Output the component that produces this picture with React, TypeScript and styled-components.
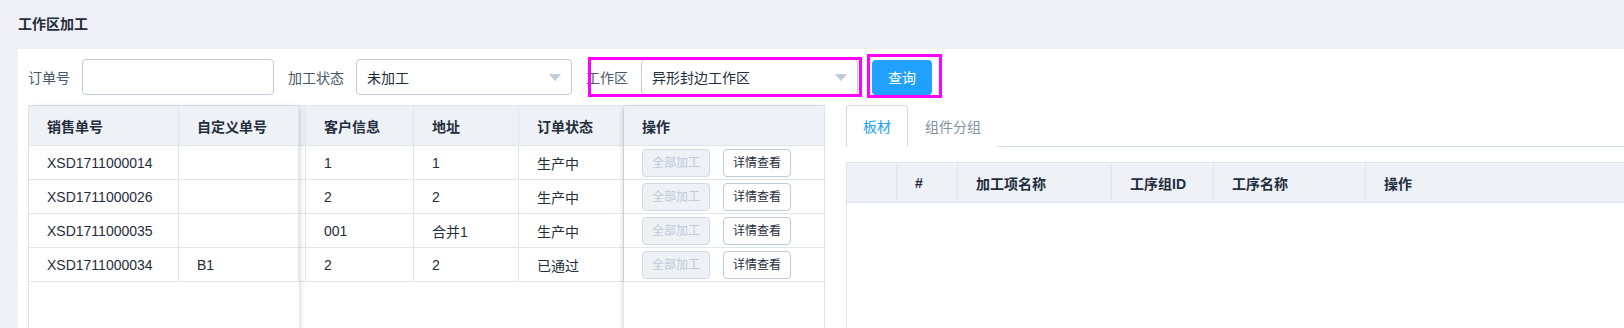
import React from 'react';
import styled, { createGlobalStyle } from 'styled-components';

const GlobalStyle = createGlobalStyle`
  html, body { margin: 0; padding: 0; overflow: hidden; background: #eff1f6; }
  body {
    font-family: "Liberation Sans", "Noto Sans CJK SC", sans-serif;
    font-size: 14px;
    color: #1f2d3d;
  }
  * { box-sizing: border-box; }
`;

const Page = styled.div`
  width: 1624px;
  height: 328px;
  overflow: hidden;
`;

const PageTitle = styled.div`
  height: 49px;
  line-height: 49px;
  padding-left: 18px;
  font-size: 14px;
  font-weight: bold;
  color: #1f2d3d;
`;

const Panel = styled.div`
  margin-left: 18px;
  width: 1640px;
  height: 300px;
  padding: 10px;
  background: #fff;
`;

const FormRow = styled.div`
  display: flex;
  align-items: center;
  height: 36px;
  margin-bottom: 10px;
`;

const FormItem = styled.div`
  position: relative;
  display: flex;
  align-items: center;
  margin-right: 14px;
`;

const Label = styled.span`
  margin-right: ${(p: { $gap?: number }) => p.$gap ?? 12}px;
  font-size: 14px;
  color: #48576a;
  white-space: nowrap;
`;

const TextInput = styled.input`
  width: 192px;
  height: 36px;
  padding: 0 10px;
  border: 1px solid #bfcbd9;
  border-radius: 4px;
  font: inherit;
  outline: none;
`;

const SelectBox = styled.div<{ $width: number }>`
  display: flex;
  align-items: center;
  justify-content: space-between;
  width: ${(p) => p.$width}px;
  height: 36px;
  padding: 0 10px;
  border: 1px solid #bfcbd9;
  border-radius: 4px;
  font-size: 14px;
  color: #1f2d3d;
`;

const PrimaryButton = styled.button`
  width: 60px;
  height: 35px;
  border: none;
  border-radius: 4px;
  background: #20a0ff;
  color: #fff;
  font: inherit;
  font-size: 14px;
`;

const Highlight = styled.div<{ $t: number; $r: number; $b: number; $l: number }>`
  position: absolute;
  top: ${(p) => p.$t}px;
  right: ${(p) => p.$r}px;
  bottom: ${(p) => p.$b}px;
  left: ${(p) => p.$l}px;
  border: 3px solid #f0f;
  pointer-events: none;
`;

const Content = styled.div`
  display: grid;
  grid-template-columns: 797px 797px;
  column-gap: 21px;
`;

const TableFrame = styled.div<{ $height: number }>`
  display: flex;
  height: ${(p) => p.$height}px;
  border: 1px solid #dfe6ec;
  border-bottom: none;
`;

const ColumnGroup = styled.div<{ $fixed?: 'left' | 'right'; $grow?: boolean }>`
  position: relative;
  z-index: ${(p) => (p.$fixed ? 2 : 1)};
  display: flex;
  flex-direction: column;
  flex: ${(p) => (p.$grow ? '1 1 auto' : 'none')};
  background: #fff;
  box-shadow: ${(p) =>
    p.$fixed === 'left'
      ? '2px 0 6px -2px rgba(0,0,0,0.22)'
      : p.$fixed === 'right'
      ? '-2px 0 6px -2px rgba(0,0,0,0.22)'
      : 'none'};
`;

const HeadRow = styled.div`
  display: flex;
  height: 40px;
  background: #eef1f6;
  border-bottom: 1px solid #dfe6ec;
`;

const BodyRow = styled.div`
  display: flex;
  height: 34px;
  border-bottom: 1px solid #dfe6ec;
`;

const Cell = styled.div<{ $w?: number; $head?: boolean; $noBorder?: boolean; $pad?: number }>`
  display: flex;
  align-items: center;
  flex: ${(p) => (p.$w ? `0 0 ${p.$w}px` : '1 1 auto')};
  padding: 0 ${(p) => p.$pad ?? 18}px;
  border-right: ${(p) => (p.$noBorder ? 'none' : '1px solid #dfe6ec')};
  font-size: 14px;
  font-weight: ${(p) => (p.$head ? 'bold' : 'normal')};
  color: #1f2d3d;
  white-space: nowrap;
  overflow: hidden;
`;

const SmallButton = styled.button<{ $disabled?: boolean }>`
  height: 28px;
  padding: 0 9px;
  margin-right: 13px;
  border: 1px solid ${(p) => (p.$disabled ? '#d1dbe5' : '#bfcbd9')};
  border-radius: 4px;
  background: ${(p) => (p.$disabled ? '#eef1f6' : '#fff')};
  color: ${(p) => (p.$disabled ? '#bfcbd9' : '#1f2d3d')};
  font-family: inherit;
  font-size: 12px;
  line-height: 1;
`;

const TabBar = styled.div`
  display: flex;
  height: 42px;
  border-bottom: 1px solid #d1dbe5;
  margin-bottom: 15px;
`;

const Tab = styled.div<{ $active?: boolean }>`
  height: 42px;
  line-height: 42px;
  padding: 0 16px;
  font-size: 14px;
  color: ${(p) => (p.$active ? '#20a0ff' : '#8391a5')};
  border: 1px solid ${(p) => (p.$active ? '#d1dbe5' : 'transparent')};
  border-bottom-color: ${(p) => (p.$active ? '#fff' : 'transparent')};
  border-radius: 4px 4px 0 0;
  background: #fff;
`;

const Caret = () => (
  <svg width="12" height="7" viewBox="0 0 12 7">
    <path d="M0.6 0.6 H11.4 L6 6.6 Z" fill="#bfcbd9" stroke="#bfcbd9" strokeWidth="0.8" strokeLinejoin="round" />
  </svg>
);

const orders = [
  { no: 'XSD1711000014', custom: '', customer: '1', addr: '1', status: '生产中' },
  { no: 'XSD1711000026', custom: '', customer: '2', addr: '2', status: '生产中' },
  { no: 'XSD1711000035', custom: '', customer: '001', addr: '合并1', status: '生产中' },
  { no: 'XSD1711000034', custom: 'B1', customer: '2', addr: '2', status: '已通过' },
];

const rightCols = [
  { w: 50, label: '' },
  { w: 61, label: '#' },
  { w: 154, label: '加工项名称' },
  { w: 102, label: '工序组ID' },
  { w: 152, label: '工序名称' },
];

export default function App() {
  return (
    <Page>
      <GlobalStyle />
      <PageTitle>工作区加工</PageTitle>
      <Panel>
        <FormRow>
          <FormItem>
            <Label>订单号</Label>
            <TextInput />
          </FormItem>
          <FormItem>
            <Label>加工状态</Label>
            <SelectBox $width={216}>
              <span>未加工</span>
              <Caret />
            </SelectBox>
          </FormItem>
          <FormItem>
            <Label $gap={13}>工作区</Label>
            <SelectBox $width={217}>
              <span>异形封边工作区</span>
              <Caret />
            </SelectBox>
            <Highlight $t={-2} $r={-4} $b={-2} $l={2} />
          </FormItem>
          <FormItem>
            <PrimaryButton>查询</PrimaryButton>
            <Highlight $t={-6} $r={-10} $b={-3} $l={-5} />
          </FormItem>
        </FormRow>

        <Content>
          <TableFrame $height={240}>
            <ColumnGroup $fixed="left">
              <HeadRow>
                <Cell $w={150} $head>销售单号</Cell>
                <Cell $w={120} $head>自定义单号</Cell>
              </HeadRow>
              {orders.map((o) => (
                <BodyRow key={o.no}>
                  <Cell $w={150}>{o.no}</Cell>
                  <Cell $w={120}>{o.custom}</Cell>
                </BodyRow>
              ))}
            </ColumnGroup>
            <ColumnGroup $grow>
              <HeadRow>
                <Cell $w={7} $pad={0} />
                <Cell $w={108} $head>客户信息</Cell>
                <Cell $w={105} $head>地址</Cell>
                <Cell $head>订单状态</Cell>
              </HeadRow>
              {orders.map((o) => (
                <BodyRow key={o.no}>
                  <Cell $w={7} $pad={0} />
                  <Cell $w={108}>{o.customer}</Cell>
                  <Cell $w={105}>{o.addr}</Cell>
                  <Cell>{o.status}</Cell>
                </BodyRow>
              ))}
            </ColumnGroup>
            <ColumnGroup $fixed="right">
              <HeadRow>
                <Cell $w={200} $head $noBorder>操作</Cell>
              </HeadRow>
              {orders.map((o) => (
                <BodyRow key={o.no}>
                  <Cell $w={200} $noBorder>
                    <SmallButton $disabled>全部加工</SmallButton>
                    <SmallButton>详情查看</SmallButton>
                  </Cell>
                </BodyRow>
              ))}
            </ColumnGroup>
          </TableFrame>

          <div>
            <TabBar>
              <Tab $active>板材</Tab>
              <Tab>组件分组</Tab>
            </TabBar>
            <TableFrame $height={200}>
              <ColumnGroup $grow>
                <HeadRow>
                  {rightCols.map((c, i) => (
                    <Cell key={i} $w={c.w} $head>{c.label}</Cell>
                  ))}
                  <Cell $head $noBorder>操作</Cell>
                </HeadRow>
              </ColumnGroup>
            </TableFrame>
          </div>
        </Content>
      </Panel>
    </Page>
  );
}
